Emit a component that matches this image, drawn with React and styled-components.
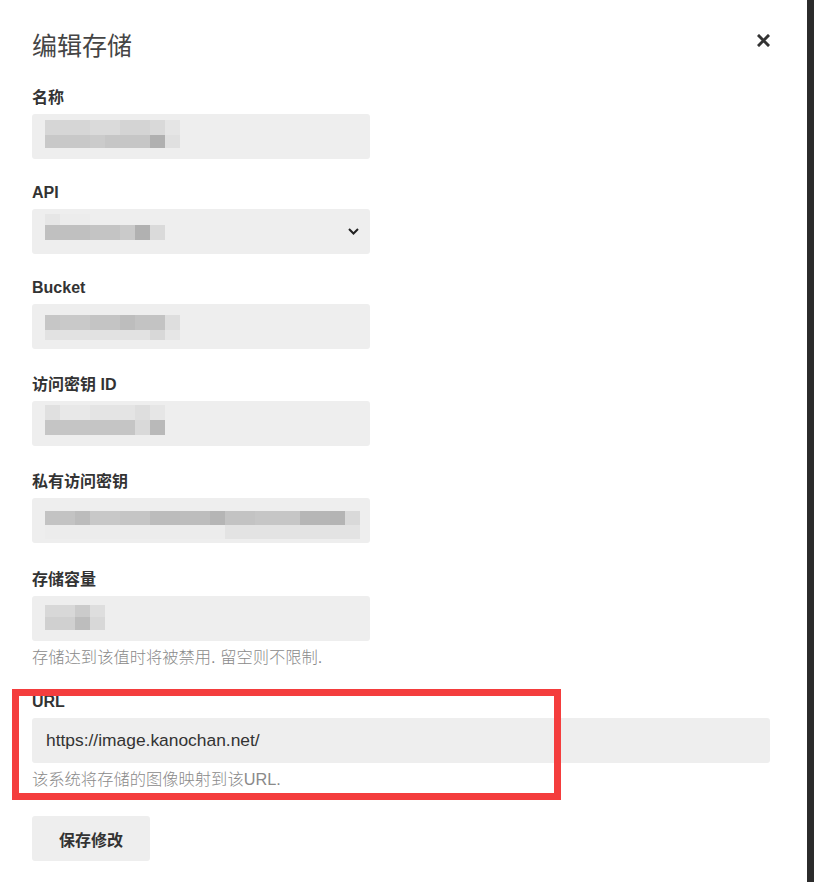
import React from 'react';
import styled, { createGlobalStyle } from 'styled-components';

const Global = createGlobalStyle`
  html, body { margin: 0; padding: 0; background: #fff; }
  body { font-family: "Liberation Sans", "Noto Sans CJK SC", sans-serif; }
  * { box-sizing: border-box; }
`;

const Page = styled.div`
  position: relative;
  display: flex;
  height: 882px;
  overflow: hidden;
  background: #fff;
`;

const Main = styled.main`
  flex: 1;
  padding: 31px 37px 0 32px;
`;

const Edge = styled.div`
  width: 7px;
  background: #2b2b2b;
`;

const Header = styled.header`
  display: flex;
  justify-content: space-between;
  align-items: flex-start;
  margin-bottom: 27px;
`;

const Title = styled.h2`
  margin: 0;
  font-size: 25px;
  line-height: 30px;
  font-weight: 400;
  color: #454545;
`;

const Close = styled.button`
  border: 0;
  background: none;
  padding: 0;
  margin-top: 3px;
  width: 13px;
  height: 13px;
  display: flex;
  cursor: pointer;
`;

const Field = styled.div`
  display: flex;
  flex-direction: column;
  margin-bottom: ${p => p.$mb}px;
`;

const Label = styled.label`
  font-size: 16px;
  line-height: 20px;
  font-weight: 700;
  color: #333;
  margin-bottom: 6px;
`;

const Box = styled.div`
  width: ${p => (p.$wide ? '738px' : '338px')};
  height: 45px;
  background: #eee;
  border-radius: 3px;
  display: flex;
  align-items: center;
  justify-content: space-between;
  padding: 0 11px 0 14px;
  font-size: 17.4px;
  color: #333;
`;

const Help = styled.div`
  margin-top: 6px;
  font-size: 16.3px;
  line-height: 20px;
  color: #8a8a8a;
  font-weight: 300;
`;

const Button = styled.button`
  height: 45px;
  padding: 0 27px;
  border: 0;
  border-radius: 3px;
  background: #eee;
  color: #333;
  font-family: inherit;
  font-size: 16px;
  font-weight: 700;
  cursor: pointer;
`;

const Highlight = styled.div`
  position: absolute;
  left: 12px;
  top: 689px;
  width: 549px;
  height: 111px;
  border: 7px solid #f43d3d;
  pointer-events: none;
`;

const PixelBlock = styled.div`
  align-self: flex-start;
  margin-top: ${p => p.$top}px;
  margin-left: -1px;
  display: flex;
  flex-direction: column;
  filter: blur(0.7px);
`;

const PixelRow = styled.div`
  display: flex;
  height: ${p => p.$h}px;
`;

const Cell = styled.div`
  height: 100%;
`;

const Chevron = () => (
  <svg width="11" height="7" viewBox="0 0 11 7" fill="none">
    <path d="M1 1l4.5 4.5L10 1" stroke="#222" strokeWidth="2" />
  </svg>
);

const Pixels = ({ top, rows }) => (
  <PixelBlock $top={top}>
    {rows.map((r, i) => (
      <PixelRow key={i} $h={r.h}>
        {r.cells.map(([w, c], j) => (
          <Cell key={j} style={{ width: w, background: c }} />
        ))}
      </PixelRow>
    ))}
  </PixelBlock>
);

const blurs = {
  name: {
    top: 6,
    rows: [
      { h: 15, cells: [[45, '#d6d6d6'], [30, '#dadada'], [30, '#d4d4d4'], [15, '#d9d9d9'], [15, '#e5e5e5']] },
      { h: 13, cells: [[45, '#c8c8c8'], [15, '#cbcbcb'], [45, '#c6c6c6'], [15, '#b0b0b0'], [15, '#e0e0e0']] },
    ],
  },
  api: {
    top: 5,
    rows: [
      { h: 11, cells: [[15, '#e6e6e6'], [30, '#ececec']] },
      { h: 15, cells: [[45, '#c0c0c0'], [30, '#c4c4c4'], [15, '#cacaca'], [15, '#b1b1b1'], [15, '#dadada']] },
    ],
  },
  bucket: {
    top: 11,
    rows: [
      { h: 15, cells: [[15, '#c6c6c6'], [30, '#c9c9c9'], [30, '#c4c4c4'], [15, '#bdbdbd'], [30, '#c3c3c3'], [15, '#dedede']] },
      { h: 10, cells: [[105, '#e2e2e2'], [15, '#d8d8d8'], [15, '#e6e6e6']] },
    ],
  },
  keyId: {
    top: 4,
    rows: [
      { h: 15, cells: [[15, '#e0e0e0'], [30, '#e8e8e8'], [45, '#e4e4e4'], [15, '#dedede'], [15, '#e6e6e6']] },
      { h: 15, cells: [[90, '#c5c5c5'], [15, '#d9d9d9'], [15, '#b9b9b9']] },
    ],
  },
  secret: {
    top: 13,
    rows: [
      {
        h: 14,
        cells: [
          [30, '#c3c3c3'], [15, '#bcbcbc'], [30, '#c8c8c8'], [30, '#c5c5c5'], [30, '#bcbcbc'],
          [30, '#bdbdbd'], [15, '#b5b5b5'], [30, '#c3c3c3'], [45, '#c6c6c6'], [30, '#b6b6b6'],
          [15, '#b4b4b4'], [15, '#d9d9d9'],
        ],
      },
      { h: 14, cells: [[180, '#ececec'], [135, '#e3e3e3']] },
    ],
  },
  quota: {
    top: 9,
    rows: [
      { h: 12, cells: [[30, '#d8d8d8'], [15, '#cbcbcb'], [15, '#dedede']] },
      { h: 13, cells: [[30, '#d0d0d0'], [15, '#bdbdbd'], [15, '#d8d8d8']] },
    ],
  },
};

export default function App() {
  return (
    <Page>
      <Global />
      <Main>
        <Header>
          <Title>编辑存储</Title>
          <Close aria-label="关闭">
            <svg width="13" height="13" viewBox="0 0 13 13">
              <path d="M2 2l9 9M11 2l-9 9" stroke="#333" strokeWidth="3" strokeLinecap="square" />
            </svg>
          </Close>
        </Header>

        <Field $mb={24}>
          <Label>名称</Label>
          <Box>
            <Pixels {...blurs.name} />
          </Box>
        </Field>

        <Field $mb={24}>
          <Label>API</Label>
          <Box>
            <Pixels {...blurs.api} />
            <Chevron />
          </Box>
        </Field>

        <Field $mb={26}>
          <Label>Bucket</Label>
          <Box>
            <Pixels {...blurs.bucket} />
          </Box>
        </Field>

        <Field $mb={26}>
          <Label>访问密钥 ID</Label>
          <Box>
            <Pixels {...blurs.keyId} />
          </Box>
        </Field>

        <Field $mb={27}>
          <Label>私有访问密钥</Label>
          <Box>
            <Pixels {...blurs.secret} />
          </Box>
        </Field>

        <Field $mb={25}>
          <Label>存储容量</Label>
          <Box>
            <Pixels {...blurs.quota} />
          </Box>
          <Help>存储达到该值时将被禁用. 留空则不限制.</Help>
        </Field>

        <Field $mb={27}>
          <Label>URL</Label>
          <Box $wide>https://image.kanochan.net/</Box>
          <Help>该系统将存储的图像映射到该URL.</Help>
        </Field>

        <Button>保存修改</Button>
      </Main>
      <Edge />
      <Highlight />
    </Page>
  );
}
